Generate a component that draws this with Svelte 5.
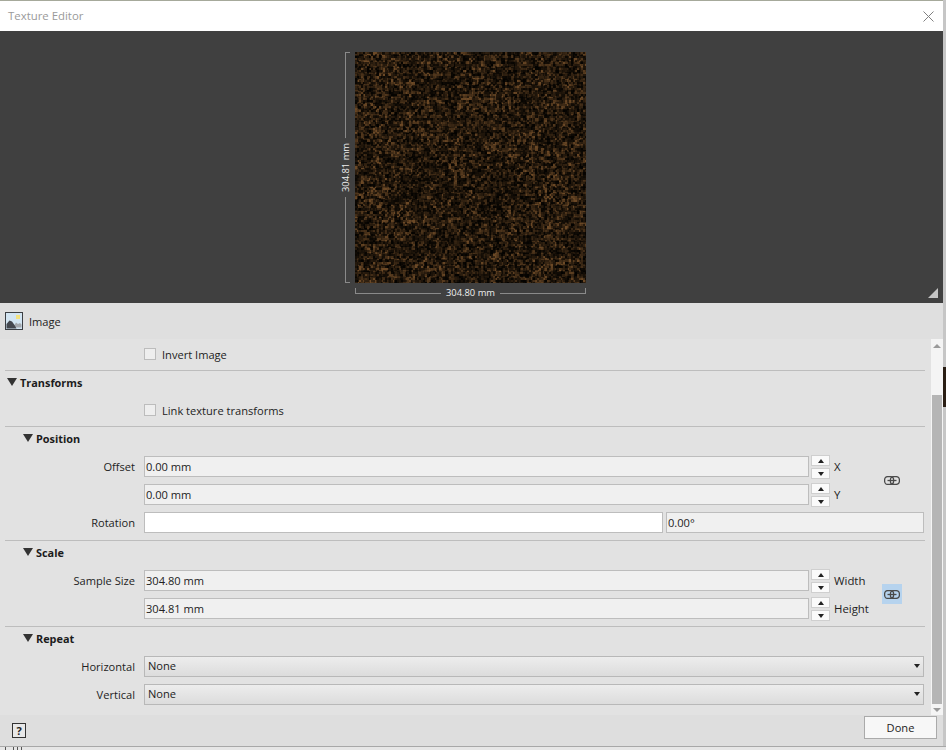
<script>
  import { onMount } from "svelte";

  let texture;

  // seeded so the grain comes out the same on every load
  function rng(seed) {
    return () => {
      seed = (seed * 1664525 + 1013904223) >>> 0;
      return seed / 4294967296;
    };
  }

  // blocky random cells, no smoothing
  function blocks(size, cell, rand) {
    const n = Math.ceil(size / cell) + 1;
    const g = new Float32Array(n * n).map(() => rand());
    return (x, y) => g[Math.floor(y / cell) * n + Math.floor(x / cell)];
  }

  // smooth blotches for the darker and lighter patches
  function blotches(size, cell, rand) {
    const n = Math.ceil(size / cell) + 2;
    const g = new Float32Array(n * n).map(() => rand());
    return (x, y) => {
      const fx = x / cell, fy = y / cell;
      const ix = Math.floor(fx), iy = Math.floor(fy);
      const tx = fx - ix, ty = fy - iy;
      const a = g[iy * n + ix], b = g[iy * n + ix + 1];
      const c = g[(iy + 1) * n + ix], d = g[(iy + 1) * n + ix + 1];
      return (a * (1 - tx) + b * tx) * (1 - ty) + (c * (1 - tx) + d * tx) * ty;
    };
  }

  onMount(() => {
    const size = 231;
    const rand = rng(7);
    const fine = blocks(size, 2, rand);
    const mid = blocks(size, 3, rand);
    const patch = blotches(size, 6, rand);
    const big = blotches(size, 24, rand);
    const ctx = texture.getContext("2d");
    const img = ctx.createImageData(size, size);
    for (let y = 0; y < size; y++) {
      for (let x = 0; x < size; x++) {
        const grain = fine(x, y) * 0.5 + mid(x, y) * 0.5;
        const shade = patch(x, y) * 0.6 + big(x, y) * 0.4;
        let v = Math.pow(grain, 1.8) * (0.45 + shade) * 1.1;
        v = Math.max(0, Math.min(1, v));
        const i = (y * size + x) * 4;
        img.data[i] = v * 105 + 3;
        img.data[i + 1] = v * 71 + 2;
        img.data[i + 2] = v * 38;
        img.data[i + 3] = 255;
      }
    }
    ctx.putImageData(img, 0, 0);
  });
</script>

{#snippet field(value)}
  <div class="input">{value}</div>
{/snippet}

{#snippet spin(value, suffix)}
  <div class="spin-row">
    {@render field(value)}
    <div class="spinner">
      <button class="spin-btn" aria-label="up"><span class="tri up"></span></button>
      <button class="spin-btn" aria-label="down"><span class="tri down"></span></button>
    </div>
    <span class="suffix">{suffix}</span>
  </div>
{/snippet}

{#snippet chain()}
  <svg width="16" height="9" viewBox="0 0 16 9" fill="none" stroke="#4a4a4a" stroke-width="1.3">
    <rect x="0.6" y="0.6" width="9" height="7.8" rx="3.2" />
    <rect x="6.4" y="0.6" width="9" height="7.8" rx="3.2" />
    <path d="M3.5 4.5h9" />
  </svg>
{/snippet}

{#snippet select(label)}
  <div class="row">
    <span class="label">{label}</span>
    <div class="select">None<span class="tri down"></span></div>
  </div>
{/snippet}

<div class="page">
  <div class="dialog">
    <div class="titlebar">
      <span>Texture Editor</span>
      <svg width="11" height="11" viewBox="0 0 11 11" stroke="#808080" stroke-width="1">
        <path d="M0.5 0.5l10 10M10.5 0.5l-10 10" />
      </svg>
    </div>

    <div class="preview">
      <div class="stage">
        <div class="dim-v">
          <i class="line"></i>
          <span>304.81 mm</span>
          <i class="line"></i>
        </div>
        <canvas bind:this={texture} width="231" height="231"></canvas>
        <div class="dim-h">
          <i class="line"></i>
          <span>304.80 mm</span>
          <i class="line"></i>
        </div>
      </div>
      <div class="grip"></div>
    </div>

    <div class="map-head">
      <svg class="map-icon" width="18" height="18" viewBox="0 0 18 18">
        <rect x="0.5" y="0.5" width="17" height="17" fill="#d3e5f2" stroke="#3c3f44" />
        <rect x="11" y="3" width="4" height="4" fill="#f3e27f" />
        <path d="M8 15.500l3-5 2 1.500 2-1 1.500 1.500v3z" fill="#a4a8ae" />
        <path d="M1.500 16.500V12l3-3.500 2.500 1 2.500 3.500 2 3.500z" fill="#45484f" />
      </svg>
      <span>Image</span>
    </div>

    <div class="body">
      <div class="props">
        <div class="check-row first">
          <span class="box"></span>Invert Image
        </div>

        <div class="head">
          <span class="tri big"></span><b>Transforms</b>
        </div>
        <div class="check-row">
          <span class="box"></span>Link texture transforms
        </div>

        <div class="head sub">
          <span class="tri big"></span><b>Position</b>
        </div>
        <div class="pair">
          <div class="pair-rows">
            <div class="row"><span class="label">Offset</span>{@render spin("0.00 mm", "X")}</div>
            <div class="row"><span class="label"></span>{@render spin("0.00 mm", "Y")}</div>
          </div>
          <div class="link">{@render chain()}</div>
        </div>
        <div class="row">
          <span class="label">Rotation</span>
          <div class="input white"></div>
          <div class="input angle">0.00°</div>
        </div>
        <div class="rule"></div>

        <div class="head sub">
          <span class="tri big"></span><b>Scale</b>
        </div>
        <div class="pair">
          <div class="pair-rows">
            <div class="row"><span class="label">Sample Size</span>{@render spin("304.80 mm", "Width")}</div>
            <div class="row"><span class="label"></span>{@render spin("304.81 mm", "Height")}</div>
          </div>
          <div class="link on">{@render chain()}</div>
        </div>
        <div class="rule"></div>

        <div class="head sub">
          <span class="tri big"></span><b>Repeat</b>
        </div>
        {@render select("Horizontal")}
        {@render select("Vertical")}
      </div>

      <div class="scrollbar">
        <span class="tri sb-up"></span>
        <div class="track"><div class="thumb"></div></div>
        <span class="tri sb-down"></span>
      </div>
    </div>

    <div class="footer">
      <span class="help">?</span>
      <button class="done">Done</button>
    </div>
  </div>

  <!-- bits of the window behind the dialog -->
  <div class="edge">
    <i class="edge-gap"></i>
    <i class="edge-dark"></i>
  </div>
</div>
<div class="behind"></div>

<style>
  :global(body) {
    background: #e6e6e6;
    font-family: "Open Sans", "Noto Sans", sans-serif;
    font-size: 11.1px;
    color: #222;
    overflow: hidden;
  }

  .page { display: flex; height: 746px; }

  .dialog {
    width: 943px;
    height: 746px;
    flex-shrink: 0;
    display: flex;
    flex-direction: column;
    background: #dfdfdf;
    overflow: hidden;
  }

  .edge {
    width: 3px;
    display: flex;
    flex-direction: column;
    background: #c6c6c6;
  }
  .edge-gap { height: 367px; }
  .edge-dark { height: 40px; background: #2a1e14; }

  .behind {
    height: 3px;
    border-top: 1px solid #a8a8a8;
    background:
      linear-gradient(#555, #555) no-repeat 5px 0 / 1px 3px,
      linear-gradient(#555, #555) no-repeat 13px 0 / 1px 3px,
      linear-gradient(#555, #555) no-repeat 17px 0 / 1px 3px,
      linear-gradient(#555, #555) no-repeat 21px 0 / 1px 3px;
  }

  .titlebar {
    height: 30px;
    flex-shrink: 0;
    box-sizing: content-box;
    display: flex;
    align-items: center;
    justify-content: space-between;
    padding: 0 9px 0 8px;
    background: #fff;
    border-top: 1px solid #a6a99b;
    color: #9a9a9a;
    font-size: 11.4px;
  }
  .titlebar span { margin-top: -1px; }

  .preview {
    height: 272px;
    flex-shrink: 0;
    position: relative;
    background: #404040;
    padding: 21px 0 0 340px;
    box-sizing: border-box;
  }
  .stage {
    display: grid;
    grid-template-columns: 15px 231px;
    grid-template-rows: 231px 20px;
    color: #eee;
    font-size: 9.4px;
  }
  canvas { display: block; }

  .dim-v {
    width: 11px;
    display: flex;
    flex-direction: column;
    align-items: center;
    background:
      linear-gradient(#8a8a8a, #8a8a8a) no-repeat 5px 0 / 1px 100%,
      linear-gradient(#8a8a8a, #8a8a8a) no-repeat 5px 0 / 5px 1px,
      linear-gradient(#8a8a8a, #8a8a8a) no-repeat 5px 100% / 5px 1px;
  }
  .dim-v .line { flex: 1; }
  .dim-v span {
    writing-mode: vertical-rl;
    transform: rotate(180deg);
    background: #404040;
    padding: 5px 0;
    line-height: 11px;
    white-space: nowrap;
  }
  .dim-h {
    grid-column: 2;
    height: 10px;
    margin-top: 5px;
    display: flex;
    align-items: center;
    justify-content: center;
    line-height: 10px;
    white-space: nowrap;
    background:
      linear-gradient(#8a8a8a, #8a8a8a) no-repeat 0 0 / 1px 5px,
      linear-gradient(#8a8a8a, #8a8a8a) no-repeat 100% 0 / 1px 5px;
  }
  .dim-h span { padding: 0 5px; }
  .dim-h .line { flex: 1; height: 1px; background: #8a8a8a; }

  .grip {
    position: absolute;
    right: 5px;
    bottom: 5px;
    width: 0;
    height: 0;
    border-left: 10px solid transparent;
    border-bottom: 10px solid #c4c4c4;
  }

  .map-head {
    height: 36px;
    flex-shrink: 0;
    display: flex;
    align-items: center;
    gap: 6px;
    padding-left: 5px;
    box-sizing: border-box;
  }

  .body {
    flex: 1;
    min-height: 0;
    display: flex;
    background: #e2e2e2;
  }
  .props {
    width: 920px;
    margin-left: 5px;
    margin-right: 6px;
    flex-shrink: 0;
  }

  .check-row {
    height: 31px;
    box-sizing: border-box;
    padding: 0 0 2px 139px;
    display: flex;
    align-items: center;
    gap: 6px;
    border-bottom: 1px solid #bdbdbd;
  }
  .check-row.first { height: 32px; padding-bottom: 1px; }
  .box {
    width: 10px;
    height: 10px;
    border: 1px solid #bcbcbc;
    background: #eee;
  }

  .head {
    height: 25px;
    box-sizing: border-box;
    padding: 0 0 3px 2px;
    display: flex;
    align-items: center;
    gap: 3px;
    font-size: 10.9px;
  }
  .head.sub { padding-left: 18px; }
  .head b { font-weight: 700; color: #1c1c1c; }

  .tri {
    display: block;
    width: 0;
    height: 0;
    border-left: 3.500px solid transparent;
    border-right: 3.500px solid transparent;
  }
  .tri.big {
    border-left-width: 5px;
    border-right-width: 5px;
    border-top: 8px solid #333;
  }
  .tri.up { border-bottom: 4px solid #222; }
  .tri.down { border-top: 4px solid #222; }

  .row {
    height: 28px;
    box-sizing: border-box;
    padding-top: 4px;
    display: flex;
    align-items: flex-start;
  }
  .label {
    width: 130px;
    margin-right: 9px;
    flex-shrink: 0;
    line-height: 21px;
    text-align: right;
  }

  .input {
    height: 21px;
    box-sizing: border-box;
    padding-left: 1px;
    line-height: 19px;
    background: #f0f0f0;
    border: 1px solid #bdbdbd;
  }
  .input.white { width: 519px; background: #fff; }
  .input.angle { width: 258px; margin-left: 3px; }

  .spin-row { display: flex; align-items: flex-start; }
  .spin-row .input { width: 665px; }
  .spinner {
    width: 19px;
    margin: -1px 0 0 2px;
    display: flex;
    flex-direction: column;
    gap: 2px;
  }
  .spin-btn {
    height: 11px;
    padding: 0;
    display: flex;
    align-items: center;
    justify-content: center;
    background: #fafafa;
    border: 1px solid #cfcfcf;
  }
  .suffix { margin-left: 4px; line-height: 21px; font-size: 11.4px; }

  .pair { display: flex; align-items: center; }
  .pair-rows { width: 877px; flex-shrink: 0; }
  .link {
    width: 20px;
    height: 20px;
    display: flex;
    align-items: center;
    justify-content: center;
  }
  .link.on { background: #b6d3ee; }

  .rule {
    height: 1px;
    margin-top: 4px;
    background: #bdbdbd;
  }

  .select {
    width: 780px;
    height: 21px;
    box-sizing: border-box;
    padding: 0 3px 2px 3px;
    display: flex;
    align-items: center;
    justify-content: space-between;
    background: linear-gradient(#ededed, #dcdcdc);
    border: 1px solid #b8b8b8;
  }

  .scrollbar {
    width: 12px;
    flex-shrink: 0;
    display: flex;
    flex-direction: column;
    background: #f4f4f4;
  }
  .sb-up, .sb-down { margin: 5px auto 0; }
  .sb-up { border-bottom: 4px solid #9a9a9a; border-left-width: 4px; border-right-width: 4px; }
  .sb-down { border-top: 4px solid #9a9a9a; border-left-width: 4px; border-right-width: 4px; margin: 4px auto 3px; }
  .track {
    flex: 1;
    padding: 47px 1px 0;
  }
  .thumb { height: 100%; background: #b5b5b5; }

  .footer {
    height: 31px;
    flex-shrink: 0;
    display: flex;
    align-items: center;
    justify-content: space-between;
    padding: 0 6px 0 12px;
    box-sizing: border-box;
    background: #dedede;
  }
  .help {
    width: 12px;
    height: 13px;
    border: 1px solid #333;
    text-align: center;
    font-weight: 700;
    line-height: 13px;
    font-size: 11px;
    background: #e8e8e8;
  }
  .done {
    width: 73px;
    height: 23px;
    margin-bottom: 6px;
    padding: 0;
    font: inherit;
    color: #222;
    background: #f7f7f7;
    border: 1px solid #aaa;
  }
</style>
